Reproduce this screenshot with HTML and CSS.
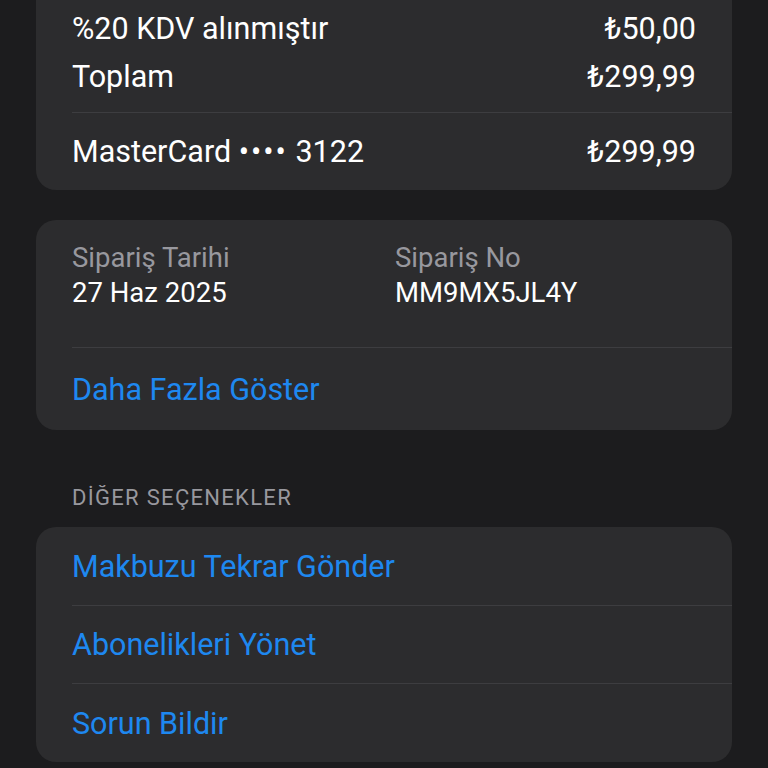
FILE: index.html
```html
<!DOCTYPE html>
<html lang="tr">
<head>
<meta charset="utf-8">
<link rel="stylesheet" href="styles.css">
</head>
<body>
<div class="page">
  <div class="card card-top">
    <div class="line-row"><span>%20 KDV alınmıştır</span><span>₺50,00</span></div>
    <div class="line-row"><span>Toplam</span><span>₺299,99</span></div>
    <div class="sep sep-total"></div>
    <div class="pay-row"><span>MasterCard <span class="dots">••••</span> 3122</span><span>₺299,99</span></div>
  </div>

  <div class="card card-info">
    <div class="info-grid">
      <div class="info-col">
        <div class="info-label">Sipariş Tarihi</div>
        <div class="info-value">27 Haz 2025</div>
      </div>
      <div class="info-col">
        <div class="info-label">Sipariş No</div>
        <div class="info-value">MM9MX5JL4Y</div>
      </div>
    </div>
    <div class="sep sep-info"></div>
    <div class="link-row link-more">Daha Fazla Göster</div>
  </div>

  <div class="section-header">DİĞER SEÇENEKLER</div>
  <div class="card card-options">
    <div class="link-row">Makbuzu Tekrar Gönder</div>
    <div class="sep"></div>
    <div class="link-row link-mid">Abonelikleri Yönet</div>
    <div class="sep"></div>
    <div class="link-row">Sorun Bildir</div>
  </div>
</div>
</body>
</html>
```
FILE: styles.css
```css
html, body {
  margin: 0;
  padding: 0;
  background: #1c1c1e;
}
body {
  font-family: Roboto, "Liberation Sans", sans-serif;
  color: #ffffff;
  font-size: 30.5px;
}
.page {
  width: 696px;
  margin-left: 36px;
  height: 768px;
  overflow: hidden;
}
.card {
  background: #2c2c2e;
  border-radius: 20px;
  padding-left: 36px;
}
.card-top {
  border-top-left-radius: 0;
  border-top-right-radius: 0;
  padding-top: 4px;
}
.line-row, .pay-row {
  display: flex;
  justify-content: space-between;
  align-items: center;
  padding-right: 36px;
}
.line-row {
  height: 48px;
}
.sep-total {
  margin-top: 12px;
}
.pay-row {
  height: 77px;
}
.dots {
  letter-spacing: 2px;
}
.sep {
  height: 1px;
  background: #3d3d40;
}
.card-info {
  margin-top: 30px;
  padding-top: 20px;
}
.info-grid {
  display: grid;
  grid-template-columns: 323px 1fr;
}
.info-label {
  color: #98989e;
  font-size: 27.5px;
  height: 36px;
  line-height: 36px;
}
.info-value {
  font-size: 27.5px;
  height: 34px;
  line-height: 34px;
}
.sep-info {
  margin-top: 37px;
}
.link-row {
  color: #1e88f0;
  height: 78px;
  display: flex;
  align-items: center;
}
.link-mid {
  height: 77px;
}
.link-more {
  height: 82px;
}
.section-header {
  margin-top: 54px;
  margin-bottom: 15px;
  padding-left: 36px;
  font-size: 22px;
  letter-spacing: 1.3px;
  line-height: 28px;
  color: #98989e;
}
```
